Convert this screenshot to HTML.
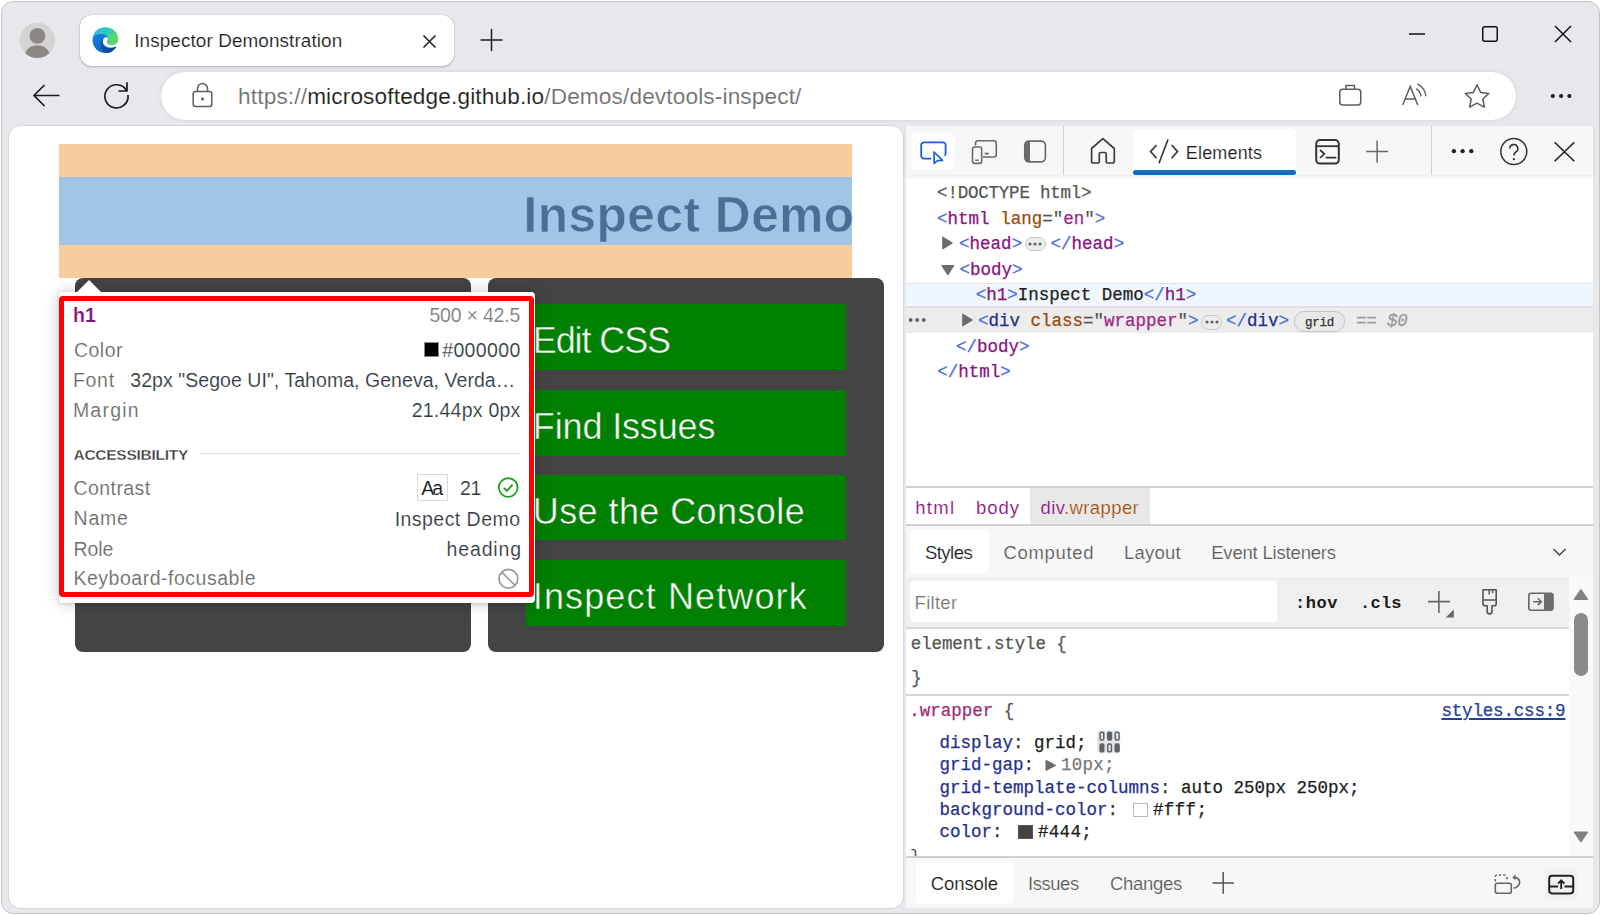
<!DOCTYPE html>
<html><head><meta charset="utf-8"><title>Inspector Demonstration</title>
<style>
html,body{margin:0;padding:0;}
body{width:1600px;height:915px;overflow:hidden;position:relative;background:#fff;font-family:'Liberation Sans', sans-serif;}
</style></head><body>
<div style="position:absolute;left:1px;top:1px;width:1597px;height:911px;background:#e6e8eb;border:1px solid #c4c4c4;border-radius:12px;"></div><svg style="position:absolute;left:19px;top:22px;" width="37" height="37" viewBox="0 0 37 37"><defs><clipPath id="avc"><circle cx="18.3" cy="18.3" r="17.7"/></clipPath></defs><circle cx="18.3" cy="18.3" r="17.7" fill="#d5d4d2"/><g clip-path="url(#avc)"><circle cx="18.4" cy="13.8" r="7.9" fill="#8b8785"/><ellipse cx="18.3" cy="34.5" rx="12.6" ry="11.3" fill="#8b8785"/></g></svg><div style="position:absolute;left:80px;top:15px;width:374px;height:51px;background:#fff;border-radius:12px;box-shadow:0 0 1px rgba(0,0,0,.3), 0 1px 2.5px rgba(0,0,0,.22);"></div><svg style="position:absolute;left:90px;top:25px;" width="31" height="31" viewBox="0 0 31 31">
<defs>
<linearGradient id="eg1" x1="0" y1="0" x2="1" y2="0.5"><stop offset="0" stop-color="#35b9f0"/><stop offset="0.5" stop-color="#2ec4c8"/><stop offset="1" stop-color="#5fdc5a"/></linearGradient>
<linearGradient id="eg2" x1="0" y1="0" x2="0.4" y2="1"><stop offset="0" stop-color="#1a8ae6"/><stop offset="1" stop-color="#0a66c8"/></linearGradient>
<linearGradient id="eg3" x1="0" y1="0" x2="1" y2="1"><stop offset="0" stop-color="#0e5bb5"/><stop offset="1" stop-color="#0b3f8f"/></linearGradient>
</defs>
<circle cx="15.4" cy="15.3" r="12.8" fill="url(#eg2)"/>
<path d="M11.2 14.5 C10 18 10.5 23 13 26 C15 28.3 19 28.5 22 26.5 C24 25.3 25.8 23.5 26.8 21.5 C22 23.5 16 23 13.8 19.5 C12.5 17.5 12.5 15 14 13 Z" fill="url(#eg3)"/>
<path d="M14 13 C12.5 15 12.5 17.5 13.8 19.5 C16 23 22 23.5 26.8 21.5 L31 21.5 L31 13.5 L28.2 13.5 C28.2 17.5 25 19.8 21.5 19.8 C19 19.8 17.2 18.5 17.2 16.8 C17.2 15.5 18 15 18 13.5 C17.8 12 15.5 11.8 14 13 Z" fill="#fff"/><path d="M26.8 21.5 L31 21.5 L31 31 L22 31 L22 26.5 C24 25.3 25.8 23.5 26.8 21.5 Z" fill="#fff"/>
<path d="M2.8 13 C3.5 6 9 2.5 15.4 2.5 C23 2.5 28.2 8 28.2 13.5 C28.2 17.5 25 19.8 21.5 19.8 C19 19.8 17.2 18.5 17.2 16.8 C17.2 15.5 18 15 18 13.5 C18 11 15 9 10.5 9 C6.5 9 3.5 11 2.8 13 Z" fill="url(#eg1)"/>
</svg><span style="position:absolute;top:28.45px;white-space:pre;font-family:'Liberation Sans', sans-serif;font-size:18.9px;line-height:26px;color:#1b1b1b;letter-spacing:0.100px;-webkit-text-stroke:0.15px #fff;left:134.20px;">Inspector Demonstration</span><svg style="position:absolute;left:421px;top:33px;" width="17" height="17" viewBox="0 0 17 17"><path d="M2.5 2.5 L14.5 14.5 M14.5 2.5 L2.5 14.5" stroke="#1b1b1b" stroke-width="1.5" fill="none"/></svg><svg style="position:absolute;left:479px;top:28px;" width="25" height="24" viewBox="0 0 25 24"><path d="M12.5 1 V23 M1.5 12 H23.5" stroke="#1b1b1b" stroke-width="1.5" fill="none"/></svg><svg style="position:absolute;left:1405px;top:26px;" width="24" height="16" viewBox="0 0 24 16"><path d="M4 8 H20" stroke="#111" stroke-width="1.5" fill="none"/></svg><svg style="position:absolute;left:1479px;top:23px;" width="22" height="22" viewBox="0 0 22 22"><rect x="3.75" y="3.75" width="14.5" height="14.5" rx="2" stroke="#111" stroke-width="1.5" fill="none"/></svg><svg style="position:absolute;left:1552px;top:23px;" width="22" height="22" viewBox="0 0 22 22"><path d="M3 3 L19 19 M19 3 L3 19" stroke="#111" stroke-width="1.5" fill="none"/></svg><svg style="position:absolute;left:31px;top:82px;" width="31" height="27" viewBox="0 0 31 27"><path d="M3.5 13.5 H28.5 M13.5 3 L3 13.5 L13.5 24" stroke="#1b1b1b" stroke-width="1.7" fill="none" stroke-linejoin="miter"/></svg><svg style="position:absolute;left:100px;top:79px;" width="32" height="32" viewBox="0 0 32 32"><path d="M26.5 11.5 A11.6 11.6 0 1 0 28 16" stroke="#1b1b1b" stroke-width="1.7" fill="none"/><path d="M27 3.2 V12 H18.5" stroke="#1b1b1b" stroke-width="1.7" fill="none"/></svg><div style="position:absolute;left:161px;top:72px;width:1355px;height:48px;background:#fff;border-radius:24px;box-shadow:0 0 4px rgba(0,0,0,.09), 0 0 1px rgba(0,0,0,.08);"></div><svg style="position:absolute;left:190px;top:81px;" width="25" height="28" viewBox="0 0 25 28"><rect x="3.2" y="10.5" width="18.6" height="15" rx="2.2" stroke="#5d5d5d" stroke-width="1.5" fill="none"/><path d="M7.5 10.5 V7.5 A5 5 0 0 1 17.5 7.5 V10.5" stroke="#5d5d5d" stroke-width="1.5" fill="none"/><circle cx="12.5" cy="18" r="1.5" fill="#5d5d5d"/></svg><span style="position:absolute;top:81.17px;white-space:pre;font-family:'Liberation Sans', sans-serif;font-size:22.6px;line-height:32px;color:#1a1a1a;letter-spacing:0.152px;-webkit-text-stroke:0.15px #fff;left:238.10px;"><span style="color:#6e6e6e">https://</span>microsoftedge.github.io<span style="color:#6e6e6e">/Demos/devtools-inspect/</span></span><svg style="position:absolute;left:1337px;top:83px;" width="26" height="24" viewBox="0 0 26 24"><rect x="2.75" y="6.2" width="21" height="15.8" rx="3" stroke="#5d5d5d" stroke-width="1.5" fill="none"/><path d="M9 6.2 V2.5 H17.5 V6.2" stroke="#5d5d5d" stroke-width="1.5" fill="none"/></svg><svg style="position:absolute;left:1400px;top:80px;" width="30" height="28" viewBox="0 0 30 28"><path d="M2.7 25 L10.2 6.4 L17.8 25 M5.2 19 H15.2" stroke="#5d5d5d" stroke-width="1.5" fill="none"/><path d="M16.2 8.6 C18.5 10.2 20.6 12.8 21 16.3" stroke="#5d5d5d" stroke-width="1.4" fill="none"/><path d="M17.4 3.8 C21.8 6.2 25.4 10.5 25.9 16.3" stroke="#5d5d5d" stroke-width="1.4" fill="none"/></svg><svg style="position:absolute;left:1462px;top:82px;" width="30" height="29" viewBox="0 0 30 29"><path d="M15 2.8 L18.6 10.4 L26.8 11.4 L20.8 17 L22.4 25.2 L15 21.2 L7.6 25.2 L9.2 17 L3.2 11.4 L11.4 10.4 Z" stroke="#5d5d5d" stroke-width="1.5" fill="none" stroke-linejoin="round"/></svg><svg style="position:absolute;left:1548px;top:91px;" width="26" height="10" viewBox="0 0 26 10"><circle cx="4.8" cy="5" r="2.1" fill="#1b1b1b"/><circle cx="13.1" cy="5" r="2.1" fill="#1b1b1b"/><circle cx="21.4" cy="5" r="2.1" fill="#1b1b1b"/></svg><div style="position:absolute;left:9px;top:126px;width:894px;height:782px;background:#fff;border-radius:12px;box-shadow:0 0 0 1px rgba(0,0,0,.07);"></div><div style="position:absolute;left:59px;top:144px;width:793px;height:134px;background:#f8cc9d;"></div><div style="position:absolute;left:59px;top:177px;width:793px;height:68px;background:#a1c5e7;"></div><span style="position:absolute;top:179.85px;white-space:pre;font-family:'Liberation Sans', sans-serif;font-size:49.5px;line-height:69px;color:#4a6e94;font-weight:700;letter-spacing:0.545px;right:745.45px;-webkit-text-stroke:0.6px #a1c5e7;">Inspect Demo</span><div style="position:absolute;left:75px;top:278.3px;width:396px;height:373.7px;background:#444;border-radius:8px;"></div><div style="position:absolute;left:488px;top:278.3px;width:396px;height:373.7px;background:#444;border-radius:8px;"></div><div style="position:absolute;left:526px;top:304px;width:320px;height:66px;background:#008000;"></div><span style="position:absolute;top:315.53px;white-space:pre;font-family:'Liberation Sans', sans-serif;font-size:36px;line-height:50px;color:#fff;letter-spacing:-1.114px;left:532.80px;-webkit-text-stroke:0.5px #008000;">Edit CSS</span><div style="position:absolute;left:526px;top:390px;width:320px;height:66px;background:#008000;"></div><span style="position:absolute;top:401.53px;white-space:pre;font-family:'Liberation Sans', sans-serif;font-size:36px;line-height:50px;color:#fff;letter-spacing:-0.140px;left:532.80px;-webkit-text-stroke:0.5px #008000;">Find Issues</span><div style="position:absolute;left:526px;top:475px;width:320px;height:65px;background:#008000;"></div><span style="position:absolute;top:486.53px;white-space:pre;font-family:'Liberation Sans', sans-serif;font-size:36px;line-height:50px;color:#fff;letter-spacing:0.414px;left:532.80px;-webkit-text-stroke:0.5px #008000;">Use the Console</span><div style="position:absolute;left:526px;top:560px;width:320px;height:66px;background:#008000;"></div><span style="position:absolute;top:571.53px;white-space:pre;font-family:'Liberation Sans', sans-serif;font-size:36px;line-height:50px;color:#fff;letter-spacing:1.129px;left:532.80px;-webkit-text-stroke:0.5px #008000;">Inspect Network</span><div style="position:absolute;left:59px;top:291.5px;width:476px;height:311.2px;background:#fff;border-radius:4px;box-shadow:0 0 15px rgba(0,0,0,.22), 0 1px 3px rgba(0,0,0,.12);"></div><svg style="position:absolute;left:73.75px;top:278px;" width="30" height="15" viewBox="0 0 30 15"><path d="M3.5 13.5 L15 2 L26.5 13.5 L26.5 15 L3.5 15 Z" fill="#fff"/></svg><div style="position:absolute;left:59.25px;top:296.25px;width:464.75px;height:290.25px;border:5px solid #f00;border-radius:4px;"></div><span style="position:absolute;top:301.94px;white-space:pre;font-family:'Liberation Sans', sans-serif;font-size:19.5px;line-height:27px;color:#881280;font-weight:700;letter-spacing:0.200px;-webkit-text-stroke:0.15px #fff;left:72.90px;">h1</span><span style="position:absolute;top:301.94px;white-space:pre;font-family:'Liberation Sans', sans-serif;font-size:19.5px;line-height:27px;color:#7c7c7c;letter-spacing:-0.200px;-webkit-text-stroke:0.15px #fff;right:1079.90px;">500 × 42.5</span><span style="position:absolute;top:336.84px;white-space:pre;font-family:'Liberation Sans', sans-serif;font-size:19.5px;line-height:27px;color:#6b6b6b;letter-spacing:0.500px;-webkit-text-stroke:0.15px #fff;left:73.90px;">Color</span><div style="position:absolute;left:424px;top:342px;width:13.4px;height:13.4px;background:#000;border:1px solid #8a8a8a;"></div><span style="position:absolute;top:336.94px;white-space:pre;font-family:'Liberation Sans', sans-serif;font-size:19.5px;line-height:27px;color:#303942;letter-spacing:0.367px;-webkit-text-stroke:0.15px #fff;right:1079.33px;">#000000</span><span style="position:absolute;top:366.94px;white-space:pre;font-family:'Liberation Sans', sans-serif;font-size:19.5px;line-height:27px;color:#6b6b6b;letter-spacing:0.733px;-webkit-text-stroke:0.15px #fff;left:72.90px;">Font</span><span style="position:absolute;top:366.94px;white-space:pre;font-family:'Liberation Sans', sans-serif;font-size:19.5px;line-height:27px;color:#303942;letter-spacing:0.047px;-webkit-text-stroke:0.15px #fff;left:130.30px;">32px &quot;Segoe UI&quot;, Tahoma, Geneva, Verda…</span><span style="position:absolute;top:397.04px;white-space:pre;font-family:'Liberation Sans', sans-serif;font-size:19.5px;line-height:27px;color:#6b6b6b;letter-spacing:1.240px;-webkit-text-stroke:0.15px #fff;left:72.90px;">Margin</span><span style="position:absolute;top:396.94px;white-space:pre;font-family:'Liberation Sans', sans-serif;font-size:19.5px;line-height:27px;color:#303942;letter-spacing:0.240px;-webkit-text-stroke:0.15px #fff;right:1079.46px;">21.44px 0px</span><span style="position:absolute;top:443.73px;white-space:pre;font-family:'Liberation Sans', sans-serif;font-size:15.5px;line-height:22px;color:#333;font-weight:700;letter-spacing:-0.267px;left:73.50px;-webkit-text-stroke:0.35px #fff;">ACCESSIBILITY</span><div style="position:absolute;left:200px;top:453px;width:320px;height:1px;background:#dcdcdc;"></div><span style="position:absolute;top:474.74px;white-space:pre;font-family:'Liberation Sans', sans-serif;font-size:19.5px;line-height:27px;color:#6b6b6b;letter-spacing:0.429px;-webkit-text-stroke:0.15px #fff;left:73.50px;">Contrast</span><div style="position:absolute;left:416.5px;top:473.8px;width:29.2px;height:25.6px;border:1px solid #dadada;"></div><span style="position:absolute;top:474.94px;white-space:pre;font-family:'Liberation Sans', sans-serif;font-size:19.5px;line-height:27px;color:#111;letter-spacing:-2.000px;-webkit-text-stroke:0.15px #fff;left:421.30px;">Aa</span><span style="position:absolute;top:474.94px;white-space:pre;font-family:'Liberation Sans', sans-serif;font-size:19.5px;line-height:27px;color:#303942;letter-spacing:-0.400px;-webkit-text-stroke:0.15px #fff;left:460.00px;">21</span><svg style="position:absolute;left:496px;top:475px;" width="25" height="25" viewBox="0 0 25 25"><circle cx="12.2" cy="12.5" r="9.4" stroke="#15a015" stroke-width="1.7" fill="none"/><path d="M7.8 12.8 L10.9 15.9 L16.6 9.6" stroke="#15a015" stroke-width="1.8" fill="none"/></svg><span style="position:absolute;top:505.04px;white-space:pre;font-family:'Liberation Sans', sans-serif;font-size:19.5px;line-height:27px;color:#6b6b6b;letter-spacing:0.800px;-webkit-text-stroke:0.15px #fff;left:73.50px;">Name</span><span style="position:absolute;top:506.34px;white-space:pre;font-family:'Liberation Sans', sans-serif;font-size:19.5px;line-height:27px;color:#303942;letter-spacing:0.455px;-webkit-text-stroke:0.15px #fff;right:1079.55px;">Inspect Demo</span><span style="position:absolute;top:536.24px;white-space:pre;font-family:'Liberation Sans', sans-serif;font-size:19.5px;line-height:27px;color:#6b6b6b;letter-spacing:-0.067px;-webkit-text-stroke:0.15px #fff;left:73.50px;">Role</span><span style="position:absolute;top:536.24px;white-space:pre;font-family:'Liberation Sans', sans-serif;font-size:19.5px;line-height:27px;color:#303942;letter-spacing:0.833px;-webkit-text-stroke:0.15px #fff;right:1078.17px;">heading</span><span style="position:absolute;top:564.94px;white-space:pre;font-family:'Liberation Sans', sans-serif;font-size:19.5px;line-height:27px;color:#6b6b6b;letter-spacing:0.506px;-webkit-text-stroke:0.15px #fff;left:73.50px;">Keyboard-focusable</span><svg style="position:absolute;left:496px;top:566px;" width="25" height="25" viewBox="0 0 25 25"><circle cx="12.4" cy="12.8" r="9.4" stroke="#9a9a9a" stroke-width="1.7" fill="none"/><path d="M5.8 6.2 L19 19.4" stroke="#9a9a9a" stroke-width="1.7" fill="none"/></svg><div style="position:absolute;left:906px;top:126px;width:687px;height:782px;background:#fff;border-bottom-right-radius:2px;"></div><div style="position:absolute;left:906px;top:126px;width:687px;height:49px;background:#f7f7f7;box-shadow:0 1.5px 4px rgba(0,0,0,.09);"></div><div style="position:absolute;left:911px;top:132px;width:44px;height:37.5px;background:#fdfdfd;border-radius:5px;"></div><svg style="position:absolute;left:918px;top:139px;" width="30" height="27" viewBox="0 0 30 27"><path d="M13.2 19.6 H6 A2.8 2.8 0 0 1 3.2 16.8 V6.2 A2.8 2.8 0 0 1 6 3.4 H24.8 A2.8 2.8 0 0 1 27.6 6.2 V14.8 A2.8 2.8 0 0 1 26.6 16.6" stroke="#1c5fd4" stroke-width="1.8" fill="none"/><path d="M16 13 L24.5 21.4 L19.6 21.6 L16.2 24.4 Z" stroke="#1c5fd4" stroke-width="1.7" fill="none" stroke-linejoin="round"/></svg><svg style="position:absolute;left:969px;top:138px;" width="30" height="28" viewBox="0 0 30 28"><path d="M6.5 7.5 V5.2 A2.5 2.5 0 0 1 9 2.7 H24.8 A2.5 2.5 0 0 1 27.3 5.2 V16.5 A2.5 2.5 0 0 1 24.8 19 H14" stroke="#6a6a6a" stroke-width="1.6" fill="none"/><rect x="3.5" y="9" width="9.2" height="16.4" rx="2.2" stroke="#6a6a6a" stroke-width="1.6" fill="none"/><path d="M6.2 22.2 H9.6 M15.8 15.6 H19.8" stroke="#6a6a6a" stroke-width="1.6" fill="none"/></svg><svg style="position:absolute;left:1022px;top:138px;" width="26" height="27" viewBox="0 0 26 27"><rect x="2.8" y="3.2" width="20.6" height="20.6" rx="4" stroke="#6a6a6a" stroke-width="1.7" fill="none"/><path d="M2.8 7.2 A4 4 0 0 1 6.8 3.2 H8 V23.8 H6.8 A4 4 0 0 1 2.8 19.8 Z" fill="#6a6a6a"/></svg><div style="position:absolute;left:1063px;top:126px;width:1px;height:49px;background:#cfcfcf;"></div><svg style="position:absolute;left:1088px;top:135px;" width="30" height="31" viewBox="0 0 30 31"><path d="M3.6 13.5 L14.9 3.6 L26.3 13.5 V26.5 A1.5 1.5 0 0 1 24.8 28 H19.6 A1.5 1.5 0 0 1 18.2 26.5 V19 A1.5 1.5 0 0 0 16.7 17.5 H12.8 A1.5 1.5 0 0 0 11.3 19 V26.5 A1.5 1.5 0 0 1 9.8 28 H5.1 A1.5 1.5 0 0 1 3.6 26.5 Z" stroke="#3b3b3b" stroke-width="1.7" fill="none" stroke-linejoin="round"/></svg><div style="position:absolute;left:1133px;top:129px;width:163px;height:46px;background:#fff;border-radius:5px 5px 0 0;"></div><div style="position:absolute;left:1133px;top:170px;width:163px;height:5px;background:#0f6cbd;border-radius:3px;"></div><svg style="position:absolute;left:1147px;top:137px;" width="34" height="29" viewBox="0 0 34 29"><path d="M9.5 8 L3.6 14.6 L9.5 21.2 M24.6 8 L30.5 14.6 L24.6 21.2 M21 2.5 L12 26.3" stroke="#3b3b3b" stroke-width="1.7" fill="none"/></svg><span style="position:absolute;top:140.66px;white-space:pre;font-family:'Liberation Sans', sans-serif;font-size:18px;line-height:25px;color:#1b1b1b;letter-spacing:0.171px;-webkit-text-stroke:0.15px #fff;left:1185.80px;">Elements</span><svg style="position:absolute;left:1313px;top:137px;" width="29" height="29" viewBox="0 0 29 29"><rect x="3.2" y="3.1" width="22.6" height="23.5" rx="3.8" stroke="#333" stroke-width="2" fill="none"/><path d="M3.2 9.2 H25.8" stroke="#333" stroke-width="1.8"/><path d="M7 13 L11.3 16.8 L7 21" stroke="#333" stroke-width="1.7" fill="none"/><path d="M13.5 20.6 H22.6" stroke="#333" stroke-width="1.8" stroke-linecap="round"/></svg><svg style="position:absolute;left:1364px;top:138px;" width="26" height="27" viewBox="0 0 26 27"><path d="M13.1 2.4 V24.7 M2.2 13.5 H24.1" stroke="#6a6a6a" stroke-width="1.5" fill="none"/></svg><div style="position:absolute;left:1431px;top:126px;width:1px;height:49px;background:#cfcfcf;"></div><svg style="position:absolute;left:1449px;top:147px;" width="28" height="9" viewBox="0 0 28 9"><circle cx="4.9" cy="4.2" r="2.15" fill="#222"/><circle cx="13.6" cy="4.2" r="2.15" fill="#222"/><circle cx="22.3" cy="4.2" r="2.15" fill="#222"/></svg><svg style="position:absolute;left:1498px;top:136px;" width="32" height="32" viewBox="0 0 32 32"><circle cx="15.8" cy="15.5" r="13" stroke="#333" stroke-width="1.5" fill="none"/><path d="M11.8 12.6 A4 4 0 1 1 17.8 16 C16.4 16.8 15.9 17.6 15.9 19.5" stroke="#333" stroke-width="1.6" fill="none"/><circle cx="15.9" cy="23.2" r="1.15" fill="#333"/></svg><svg style="position:absolute;left:1552px;top:140px;" width="25" height="24" viewBox="0 0 25 24"><path d="M2.6 2.2 L22.3 21.3 M22.3 2.2 L2.6 21.3" stroke="#222" stroke-width="1.6" fill="none"/></svg><div style="position:absolute;left:906px;top:282.5px;width:687px;height:1.5px;background:#e3e3e3;"></div><div style="position:absolute;left:906px;top:284px;width:687px;height:22px;background:#f0f6fd;"></div><div style="position:absolute;left:906px;top:306px;width:687px;height:1.5px;background:#e0e0e0;"></div><div style="position:absolute;left:906px;top:307.5px;width:687px;height:25.5px;background:#ececec;"></div><span style="position:absolute;top:180.84px;white-space:pre;font-family:'Liberation Mono', monospace;font-size:17.5px;line-height:24px;color:#555;letter-spacing:-0.214px;-webkit-text-stroke:0.25px currentColor;left:937.10px;">&lt;!DOCTYPE html&gt;</span><span style="position:absolute;top:206.84px;white-space:pre;font-family:'Liberation Mono', monospace;font-size:17.5px;line-height:24px;color:#555;-webkit-text-stroke:0.25px currentColor;left:937.10px;"><span style="color:#4a6fd8">&lt;</span><span style="color:#881280">html</span> <span style="color:#9a4a0a">lang</span><span style="color:#555">="</span><span style="color:#9c2a84">en</span><span style="color:#555">"</span><span style="color:#4a6fd8">&gt;</span></span><svg style="position:absolute;left:941px;top:235px;" width="14" height="16" viewBox="0 0 14 16"><path d="M1.8 2.2 L11.2 8 L1.8 13.8 Z" fill="#6b6b6b" stroke="#6b6b6b" stroke-width="1.2" stroke-linejoin="round"/></svg><span style="position:absolute;top:232.34px;white-space:pre;font-family:'Liberation Mono', monospace;font-size:17.5px;line-height:24px;color:#555;-webkit-text-stroke:0.25px currentColor;left:959.10px;"><span style="color:#4a6fd8">&lt;</span><span style="color:#881280">head</span><span style="color:#4a6fd8">&gt;</span></span><div style="position:absolute;left:1024.7px;top:236.8px;width:19.299999999999955px;height:12.699999999999989px;background:#ececec;border:1px solid #c9c9c9;border-radius:8px;"></div><svg style="position:absolute;left:1027.35px;top:241.15px;" width="16" height="6" viewBox="0 0 16 6"><circle cx="3" cy="3" r="1.6" fill="#666"/><circle cx="8" cy="3" r="1.6" fill="#666"/><circle cx="13" cy="3" r="1.6" fill="#666"/></svg><span style="position:absolute;top:232.34px;white-space:pre;font-family:'Liberation Mono', monospace;font-size:17.5px;line-height:24px;color:#555;-webkit-text-stroke:0.25px currentColor;left:1050.60px;"><span style="color:#4a6fd8">&lt;/</span><span style="color:#881280">head</span><span style="color:#4a6fd8">&gt;</span></span><svg style="position:absolute;left:940px;top:263.3px;" width="16" height="14" viewBox="0 0 16 14"><path d="M2 2.6 L13.6 2.6 L7.8 11.6 Z" fill="#6b6b6b" stroke="#6b6b6b" stroke-width="1.2" stroke-linejoin="round"/></svg><span style="position:absolute;top:258.04px;white-space:pre;font-family:'Liberation Mono', monospace;font-size:17.5px;line-height:24px;color:#555;-webkit-text-stroke:0.25px currentColor;left:959.40px;"><span style="color:#4a6fd8">&lt;</span><span style="color:#881280">body</span><span style="color:#4a6fd8">&gt;</span></span><span style="position:absolute;top:283.34px;white-space:pre;font-family:'Liberation Mono', monospace;font-size:17.5px;line-height:24px;color:#555;-webkit-text-stroke:0.25px currentColor;left:975.70px;"><span style="color:#4a6fd8">&lt;</span><span style="color:#881280">h1</span><span style="color:#4a6fd8">&gt;</span><span style="color:#1f1f1f">Inspect Demo</span><span style="color:#4a6fd8">&lt;/</span><span style="color:#881280">h1</span><span style="color:#4a6fd8">&gt;</span></span><svg style="position:absolute;left:907px;top:315px;" width="22" height="10" viewBox="0 0 22 10"><circle cx="3.6" cy="5" r="2" fill="#666"/><circle cx="10.2" cy="5" r="2" fill="#666"/><circle cx="16.8" cy="5" r="2" fill="#666"/></svg><svg style="position:absolute;left:961px;top:312.4px;" width="14" height="16" viewBox="0 0 14 16"><path d="M1.8 2.2 L11.2 8 L1.8 13.8 Z" fill="#6b6b6b" stroke="#6b6b6b" stroke-width="1.2" stroke-linejoin="round"/></svg><span style="position:absolute;top:309.34px;white-space:pre;font-family:'Liberation Mono', monospace;font-size:17.5px;line-height:24px;color:#555;-webkit-text-stroke:0.25px currentColor;left:978.00px;"><span style="color:#4a6fd8">&lt;</span><span style="color:#1f2f8a">div</span> <span style="color:#9a4a0a">class</span><span style="color:#555">="</span><span style="color:#9c2a84">wrapper</span><span style="color:#555">"</span><span style="color:#4a6fd8">&gt;</span></span><div style="position:absolute;left:1200.8px;top:314.5px;width:19.5px;height:13.100000000000023px;background:#ececec;border:1px solid #c9c9c9;border-radius:8px;"></div><svg style="position:absolute;left:1203.55px;top:319.05px;" width="16" height="6" viewBox="0 0 16 6"><circle cx="3" cy="3" r="1.6" fill="#666"/><circle cx="8" cy="3" r="1.6" fill="#666"/><circle cx="13" cy="3" r="1.6" fill="#666"/></svg><span style="position:absolute;top:309.34px;white-space:pre;font-family:'Liberation Mono', monospace;font-size:17.5px;line-height:24px;color:#555;-webkit-text-stroke:0.25px currentColor;left:1226.00px;"><span style="color:#4a6fd8">&lt;/</span><span style="color:#1f2f8a">div</span><span style="color:#4a6fd8">&gt;</span></span><div style="position:absolute;left:1293.8px;top:310.5px;width:49.2px;height:19.2px;background:#e8e8e8;border:1px solid #c4c4c4;border-radius:10px;"></div><span style="position:absolute;top:313.67px;white-space:pre;font-family:'Liberation Mono', monospace;font-size:12.5px;line-height:18px;color:#333;letter-spacing:-0.267px;-webkit-text-stroke:0.25px currentColor;left:1305.00px;">grid</span><span style="position:absolute;top:309.34px;white-space:pre;font-family:'Liberation Mono', monospace;font-size:17.5px;line-height:24px;color:#9a9a9a;letter-spacing:-0.200px;font-style:italic;-webkit-text-stroke:0.25px currentColor;left:1356.00px;">== $0</span><span style="position:absolute;top:334.94px;white-space:pre;font-family:'Liberation Mono', monospace;font-size:17.5px;line-height:24px;color:#555;-webkit-text-stroke:0.25px currentColor;left:956.00px;"><span style="color:#4a6fd8">&lt;/</span><span style="color:#881280">body</span><span style="color:#4a6fd8">&gt;</span></span><span style="position:absolute;top:360.34px;white-space:pre;font-family:'Liberation Mono', monospace;font-size:17.5px;line-height:24px;color:#555;-webkit-text-stroke:0.25px currentColor;left:937.30px;"><span style="color:#4a6fd8">&lt;/</span><span style="color:#881280">html</span><span style="color:#4a6fd8">&gt;</span></span><div style="position:absolute;left:906px;top:486px;width:687px;height:1.5px;background:#d0d0d0;"></div><div style="position:absolute;left:1030px;top:487.5px;width:120px;height:36.5px;background:#e8e8e8;"></div><div style="position:absolute;left:906px;top:524px;width:687px;height:1.5px;background:#d0d0d0;"></div><span style="position:absolute;top:495.39px;white-space:pre;font-family:'Liberation Sans', sans-serif;font-size:18.5px;line-height:26px;color:#881280;letter-spacing:1.333px;-webkit-text-stroke:0.15px #fff;left:915.20px;">html</span><span style="position:absolute;top:495.39px;white-space:pre;font-family:'Liberation Sans', sans-serif;font-size:18.5px;line-height:26px;color:#881280;letter-spacing:1.000px;-webkit-text-stroke:0.15px #fff;left:975.90px;">body</span><span style="position:absolute;top:495.39px;white-space:pre;font-family:'Liberation Sans', sans-serif;font-size:18.5px;line-height:26px;color:#881280;letter-spacing:0.400px;-webkit-text-stroke:0.15px #fff;left:1040.50px;"><span style="color:#881280">div</span><span style="color:#a0500f">.wrapper</span></span><div style="position:absolute;left:906px;top:525.5px;width:687px;height:51px;background:#f7f7f7;"></div><div style="position:absolute;left:909.5px;top:528.8px;width:79.2px;height:43.8px;background:#fff;border-radius:5px;"></div><span style="position:absolute;top:540.39px;white-space:pre;font-family:'Liberation Sans', sans-serif;font-size:18.5px;line-height:26px;color:#1b1b1b;letter-spacing:-0.520px;-webkit-text-stroke:0.15px #fff;left:924.90px;">Styles</span><span style="position:absolute;top:540.39px;white-space:pre;font-family:'Liberation Sans', sans-serif;font-size:18.5px;line-height:26px;color:#5c5c5c;letter-spacing:0.657px;-webkit-text-stroke:0.15px #fff;left:1003.50px;">Computed</span><span style="position:absolute;top:540.39px;white-space:pre;font-family:'Liberation Sans', sans-serif;font-size:18.5px;line-height:26px;color:#5c5c5c;letter-spacing:0.240px;-webkit-text-stroke:0.15px #fff;left:1123.90px;">Layout</span><span style="position:absolute;top:540.39px;white-space:pre;font-family:'Liberation Sans', sans-serif;font-size:18.5px;line-height:26px;color:#5c5c5c;letter-spacing:-0.186px;-webkit-text-stroke:0.15px #fff;left:1211.20px;">Event Listeners</span><svg style="position:absolute;left:1549px;top:543px;" width="22" height="18" viewBox="0 0 22 18"><path d="M4.5 6 L10.5 12 L16.5 6" stroke="#444" stroke-width="1.5" fill="none"/></svg><div style="position:absolute;left:906px;top:576.5px;width:663px;height:51px;background:#efefef;"></div><div style="position:absolute;left:910px;top:581px;width:367px;height:41px;background:#fff;border-radius:4px;"></div><span style="position:absolute;top:589.59px;white-space:pre;font-family:'Liberation Sans', sans-serif;font-size:18.5px;line-height:26px;color:#777;letter-spacing:0.280px;-webkit-text-stroke:0.15px #fff;left:914.60px;">Filter</span><span style="position:absolute;top:592.47px;white-space:pre;font-family:'Liberation Mono', monospace;font-size:17px;line-height:24px;color:#1b1b1b;font-weight:700;letter-spacing:0.533px;left:1295.00px;">:hov</span><span style="position:absolute;top:592.47px;white-space:pre;font-family:'Liberation Mono', monospace;font-size:17px;line-height:24px;color:#1b1b1b;font-weight:700;letter-spacing:0.200px;left:1360.10px;">.cls</span><svg style="position:absolute;left:1426px;top:589px;" width="30" height="31" viewBox="0 0 30 31"><path d="M12.9 2 V24 M2 12.6 H24" stroke="#666" stroke-width="1.6" fill="none"/><path d="M27.8 20.5 V28.6 H19.7 Z" fill="#666"/></svg><svg style="position:absolute;left:1479px;top:587px;" width="22" height="29" viewBox="0 0 22 29"><path d="M4 2.8 H17.2 V16.8 A2 2 0 0 1 15.2 18.8 H13 V24.5 A2.4 2.4 0 0 1 8.2 24.5 V18.8 H6 A2 2 0 0 1 4 16.8 Z" stroke="#555" stroke-width="1.6" fill="none" stroke-linejoin="round"/><path d="M4 13 H17.2 M10.2 2.8 V7.5 M13.6 2.8 V6" stroke="#555" stroke-width="1.5" fill="none"/></svg><svg style="position:absolute;left:1526px;top:590px;" width="30" height="23" viewBox="0 0 30 23"><rect x="2.8" y="3.2" width="24.2" height="17" rx="2.5" stroke="#666" stroke-width="1.6" fill="none"/><path d="M18 3.2 H24.5 A2.5 2.5 0 0 1 27 5.7 V17.7 A2.5 2.5 0 0 1 24.5 20.2 H18 Z" fill="#6e6e6e"/><path d="M7.2 11.7 H15 M11.9 8.3 L15.3 11.7 L11.9 15.1" stroke="#666" stroke-width="1.5" fill="none"/></svg><div style="position:absolute;left:906px;top:627px;width:663px;height:1.5px;background:#d6d6d6;"></div><div style="position:absolute;left:1569px;top:578px;width:24px;height:278px;background:#f9f9f9;"></div><svg style="position:absolute;left:1572px;top:587px;" width="18" height="15" viewBox="0 0 18 15"><path d="M2.6 12.3 L8.9 3 L15.2 12.3 Z" fill="#808080" stroke="#808080" stroke-width="1.6" stroke-linejoin="round"/></svg><div style="position:absolute;left:1574px;top:613px;width:14px;height:63.4px;background:#8a8a8a;border-radius:7px;"></div><svg style="position:absolute;left:1572px;top:829px;" width="18" height="15" viewBox="0 0 18 15"><path d="M2.6 3.2 L8.9 12.5 L15.2 3.2 Z" fill="#808080" stroke="#808080" stroke-width="1.6" stroke-linejoin="round"/></svg><span style="position:absolute;top:632.34px;white-space:pre;font-family:'Liberation Mono', monospace;font-size:17.5px;line-height:24px;color:#555;letter-spacing:-0.114px;-webkit-text-stroke:0.25px currentColor;left:910.80px;">element.style {</span><span style="position:absolute;top:666.04px;white-space:pre;font-family:'Liberation Mono', monospace;font-size:17.5px;line-height:24px;color:#555;-webkit-text-stroke:0.25px currentColor;left:911.20px;">}</span><div style="position:absolute;left:906px;top:694px;width:663px;height:1.5px;background:#d6d6d6;"></div><span style="position:absolute;top:698.94px;white-space:pre;font-family:'Liberation Mono', monospace;font-size:17.5px;line-height:24px;color:#555;-webkit-text-stroke:0.25px currentColor;left:909.20px;"><span style="color:#a12c72">.wrapper</span> {</span><span style="position:absolute;top:699.34px;white-space:pre;font-family:'Liberation Mono', monospace;font-size:17.5px;line-height:24px;color:#1f3d9a;letter-spacing:-0.164px;-webkit-text-stroke:0.25px currentColor;left:1441.40px;text-decoration:underline;text-underline-offset:2px;text-decoration-thickness:1.8px;">styles.css:9</span><span style="position:absolute;top:730.84px;white-space:pre;font-family:'Liberation Mono', monospace;font-size:17.5px;line-height:24px;color:#1b1b1b;-webkit-text-stroke:0.25px currentColor;left:939.50px;"><span style="color:#1f2f8a">display</span><span style="color:#333">: </span><span style="color:#1b1b1b">grid;</span></span><svg style="position:absolute;left:1096px;top:729px;" width="26" height="26" viewBox="0 0 26 26"><rect x="1.1" y="1.4" width="23.1" height="22.9" rx="3.5" fill="#e3e6ea"/><rect x="4.15" y="3.25" width="3.6" height="7.7" rx="1.2" fill="none" stroke="#5f6368" stroke-width="1.5"/><rect x="3.4" y="14.2" width="5.1" height="9.3" rx="1.8" fill="#5f6368"/><rect x="11" y="2.5" width="5.2" height="9.2" rx="1.8" fill="#5f6368"/><rect x="11.75" y="14.95" width="3.7" height="7.8" rx="1.2" fill="none" stroke="#5f6368" stroke-width="1.5"/><rect x="19.25" y="3.25" width="3.8" height="7.7" rx="1.2" fill="none" stroke="#5f6368" stroke-width="1.5"/><rect x="18.5" y="14.2" width="5.3" height="9.3" rx="1.8" fill="#5f6368"/></svg><span style="position:absolute;top:753.34px;white-space:pre;font-family:'Liberation Mono', monospace;font-size:17.5px;line-height:24px;color:#1b1b1b;-webkit-text-stroke:0.25px currentColor;left:939.50px;"><span style="color:#1f2f8a">grid-gap</span><span style="color:#333">: </span></span><svg style="position:absolute;left:1044px;top:759px;" width="14" height="14" viewBox="0 0 14 14"><path d="M2 1.3 L11.6 6.4 L2 11.5 Z" fill="#6b6b6b" stroke="#6b6b6b" stroke-width="1" stroke-linejoin="round"/></svg><span style="position:absolute;top:753.34px;white-space:pre;font-family:'Liberation Mono', monospace;font-size:17.5px;line-height:24px;color:#777;letter-spacing:0.250px;-webkit-text-stroke:0.25px currentColor;left:1061.00px;">10px;</span><span style="position:absolute;top:776.24px;white-space:pre;font-family:'Liberation Mono', monospace;font-size:17.5px;line-height:24px;color:#1b1b1b;-webkit-text-stroke:0.25px currentColor;left:939.50px;"><span style="color:#1f2f8a">grid-template-columns</span><span style="color:#333">: </span><span style="color:#1b1b1b">auto 250px 250px;</span></span><span style="position:absolute;top:798.34px;white-space:pre;font-family:'Liberation Mono', monospace;font-size:17.5px;line-height:24px;color:#1b1b1b;-webkit-text-stroke:0.25px currentColor;left:939.50px;"><span style="color:#1f2f8a">background-color</span><span style="color:#333">: </span></span><div style="position:absolute;left:1133px;top:802.8px;width:12.8px;height:12.3px;background:#fff;border:1px solid #b9b9b9;"></div><span style="position:absolute;top:798.34px;white-space:pre;font-family:'Liberation Mono', monospace;font-size:17.5px;line-height:24px;color:#1b1b1b;letter-spacing:0.400px;-webkit-text-stroke:0.25px currentColor;left:1152.90px;">#fff;</span><span style="position:absolute;top:820.44px;white-space:pre;font-family:'Liberation Mono', monospace;font-size:17.5px;line-height:24px;color:#1b1b1b;-webkit-text-stroke:0.25px currentColor;left:939.50px;"><span style="color:#1f2f8a">color</span><span style="color:#333">: </span></span><div style="position:absolute;left:1017.5px;top:824.6px;width:13.4px;height:12.5px;background:#444;border:1px solid #555;"></div><span style="position:absolute;top:820.44px;white-space:pre;font-family:'Liberation Mono', monospace;font-size:17.5px;line-height:24px;color:#1b1b1b;letter-spacing:0.300px;-webkit-text-stroke:0.25px currentColor;left:1038.00px;">#444;</span><div style="position:absolute;left:906px;top:845px;width:663px;height:11px;overflow:hidden"><span style="position:absolute;left:4px;top:-0.5px;font-family:'Liberation Mono',monospace;font-size:17.5px;line-height:24px;color:#555">}</span></div><div style="position:absolute;left:906px;top:856px;width:687px;height:1.5px;background:#d0d0d0;"></div><div style="position:absolute;left:906px;top:857.5px;width:687px;height:50.5px;background:#f7f7f7;border-bottom-right-radius:2px;"></div><div style="position:absolute;left:916px;top:861px;width:98px;height:43px;background:#fff;border-radius:5px;"></div><span style="position:absolute;top:871.29px;white-space:pre;font-family:'Liberation Sans', sans-serif;font-size:18.5px;line-height:26px;color:#1b1b1b;letter-spacing:-0.100px;-webkit-text-stroke:0.15px #fff;left:930.80px;">Console</span><span style="position:absolute;top:871.29px;white-space:pre;font-family:'Liberation Sans', sans-serif;font-size:18.5px;line-height:26px;color:#5c5c5c;letter-spacing:-0.480px;-webkit-text-stroke:0.15px #fff;left:1028.10px;">Issues</span><span style="position:absolute;top:871.29px;white-space:pre;font-family:'Liberation Sans', sans-serif;font-size:18.5px;line-height:26px;color:#5c5c5c;letter-spacing:-0.300px;-webkit-text-stroke:0.15px #fff;left:1110.00px;">Changes</span><svg style="position:absolute;left:1210px;top:870px;" width="26" height="26" viewBox="0 0 26 26"><path d="M13.2 2 V23.8 M2.5 12.9 H24" stroke="#555" stroke-width="1.5" fill="none"/></svg><svg style="position:absolute;left:1490px;top:872px;" width="34" height="24" viewBox="0 0 34 24"><path d="M5.3 9.5 V5 A2 2 0 0 1 7.3 3 H15 A2 2 0 0 1 17 5 V9.5" stroke="#666" stroke-width="1.5" stroke-dasharray="2.4 2" fill="none"/><rect x="5.3" y="11.2" width="16" height="10" rx="2" stroke="#666" stroke-width="1.6" fill="none"/><path d="M23.6 16.2 C27.8 15.5 29.8 12.5 29.6 10 C29.4 7.2 27 5.6 24.5 5.4" stroke="#666" stroke-width="1.6" fill="none"/><path d="M22.2 5.4 L25.6 2.6 L25.6 8.2 Z" fill="#666"/></svg><div style="position:absolute;left:1545px;top:868px;width:32px;height:32px;background:#f1f1f1;border-radius:4px;"></div><svg style="position:absolute;left:1546px;top:873px;" width="31" height="23" viewBox="0 0 31 23"><rect x="3.2" y="2.8" width="24" height="17.6" rx="2.8" stroke="#222" stroke-width="2" fill="none"/><path d="M3.2 13.5 H12 M18.5 13.5 H27.2" stroke="#222" stroke-width="1.8"/><path d="M15.2 16 V7.5 M12 10.6 L15.2 7.3 L18.4 10.6" stroke="#222" stroke-width="1.9" fill="none"/></svg>
</body></html>
